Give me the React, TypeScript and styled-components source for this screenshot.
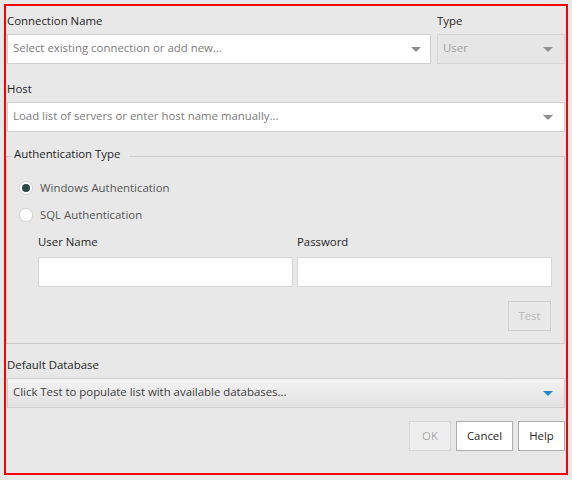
import React from "react";
import styled, { createGlobalStyle, css } from "styled-components";

const Global = createGlobalStyle`
  html, body { margin: 0; padding: 0; background: #e8e8e8; }
  body {
    font-family: "Open Sans", "Noto Sans", sans-serif;
    font-size: 11.4px;
    color: #1f1f1f;
  }
  * { box-sizing: border-box; }
`;

const Frame = styled.div`
  margin: 4px 0 0 4px;
  width: 564px;
  height: 471px;
  border: 2px solid #ff0000;
  padding: 7px 1px 0 1px;
  display: flex;
  flex-direction: column;
`;

const TopRow = styled.div`
  display: grid;
  grid-template-columns: 1fr 128px;
  column-gap: 6px;
`;

const Field = styled.div<{ $mt?: number }>`
  display: flex;
  flex-direction: column;
  gap: 5px;
  margin-top: ${(p) => p.$mt ?? 0}px;
`;

const Label = styled.div`
  line-height: 16px;
  height: 16px;
  color: #1f1f1f;
  white-space: nowrap;
`;

type Variant = "input" | "disabled" | "gradient";

const Combo = styled.div<{ $variant: Variant; $pr?: number }>`
  height: 30px;
  display: flex;
  align-items: center;
  justify-content: space-between;
  padding: 0 ${(p) => p.$pr ?? 11}px 0 5px;
  border: 1px solid #d0d0d0;
  background: #ffffff;
  color: #7d7d7d;
  white-space: nowrap;
  overflow: hidden;
  ${(p) =>
    p.$variant === "disabled" &&
    css`
      background: #e6e6e6;
      border-color: #d6d6d6;
      color: #a0a0a0;
    `}
  ${(p) =>
    p.$variant === "gradient" &&
    css`
      background: linear-gradient(#f3f3f3, #e2e2e2);
      border-color: #cdcdcd;
      color: #3c3c3c;
    `}
`;

const ComboText = styled.span`
  padding-bottom: 4px;
`;

const Arrow = ({ color }: { color: string }) => (
  <svg width="10" height="5" viewBox="0 0 10 5" style={{ flex: "none" }}>
    <polygon points="0,0 10,0 5,5" fill={color} />
  </svg>
);

const Group = styled.fieldset`
  margin: 14px 0 0 -1px;
  padding: 8px 12px 12px 12px;
  border: 1px solid #cccccc;
  display: flex;
  flex-direction: column;
  min-width: 0;
`;

const Legend = styled.legend`
  margin-left: -7px;
  padding: 0 9px 4px 2px;
  line-height: 16px;
  color: #1f1f1f;
`;

const RadioRow = styled.label`
  height: 27px;
  display: flex;
  align-items: center;
  gap: 7px;
  color: #555555;
`;

const RadioCircle = styled.span<{ $checked?: boolean }>`
  width: 14px;
  height: 14px;
  border-radius: 50%;
  background: #ffffff;
  border: 1px solid #d6d6d6;
  box-shadow: 0 0 1px rgba(0, 0, 0, 0.08);
  display: flex;
  align-items: center;
  justify-content: center;
  flex: none;
  &::after {
    content: "";
    width: 8px;
    height: 8px;
    border-radius: 50%;
    background: ${(p) => (p.$checked ? "#2e4748" : "transparent")};
  }
`;

const Credentials = styled.div`
  margin: 6px 0 0 19px;
  display: grid;
  grid-template-columns: 1fr 1fr;
  column-gap: 4px;
`;

const CredField = styled.div`
  display: flex;
  flex-direction: column;
  gap: 7px;
`;

const TextBox = styled.div`
  height: 30px;
  background: #ffffff;
  border: 1px solid #d6d6d6;
`;

const Button = styled.button<{ $w: number; $kind?: "normal" | "disabled" | "ghost" }>`
  width: ${(p) => p.$w}px;
  height: 30px;
  font: inherit;
  padding: 0 0 1px 0;
  background: #ffffff;
  border: 1px solid #adadad;
  color: #1f1f1f;
  ${(p) =>
    p.$kind === "disabled" &&
    css`
      background: #eeeeee;
      border-color: #d6d6d6;
      color: #a9a9a9;
    `}
  ${(p) =>
    p.$kind === "ghost" &&
    css`
      background: transparent;
      border-color: #cfcfcf;
      color: #b8b8b8;
    `}
`;

const TestButton = styled(Button)`
  margin: 14px 1px 0 0;
  align-self: flex-end;
`;

const ButtonRow = styled.div`
  margin-top: 13px;
  display: flex;
  justify-content: flex-end;
  gap: 5px;
`;

export default function App() {
  return (
    <>
      <Global />
      <Frame>
        <TopRow>
          <Field>
            <Label>Connection Name</Label>
            <Combo $variant="input" $pr={9}>
              <ComboText>Select existing connection or add new...</ComboText>
              <Arrow color="#8f8f8f" />
            </Combo>
          </Field>
          <Field>
            <Label>Type</Label>
            <Combo $variant="disabled">
              <ComboText>User</ComboText>
              <Arrow color="#8f8f8f" />
            </Combo>
          </Field>
        </TopRow>

        <Field $mt={17}>
          <Label>Host</Label>
          <Combo $variant="input">
            <ComboText>Load list of servers or enter host name manually...</ComboText>
            <Arrow color="#8f8f8f" />
          </Combo>
        </Field>

        <Group>
          <Legend>Authentication Type</Legend>
          <RadioRow>
            <RadioCircle $checked />
            Windows Authentication
          </RadioRow>
          <RadioRow>
            <RadioCircle />
            SQL Authentication
          </RadioRow>
          <Credentials>
            <CredField>
              <Label>User Name</Label>
              <TextBox />
            </CredField>
            <CredField>
              <Label>Password</Label>
              <TextBox />
            </CredField>
          </Credentials>
          <TestButton $w={43} $kind="ghost">Test</TestButton>
        </Group>

        <Field $mt={13}>
          <Label>Default Database</Label>
          <Combo $variant="gradient">
            <ComboText>Click Test to populate list with available databases...</ComboText>
            <Arrow color="#1d8bcb" />
          </Combo>
        </Field>

        <ButtonRow>
          <Button $w={42} $kind="disabled">OK</Button>
          <Button $w={57}>Cancel</Button>
          <Button $w={47}>Help</Button>
        </ButtonRow>
      </Frame>
    </>
  );
}
